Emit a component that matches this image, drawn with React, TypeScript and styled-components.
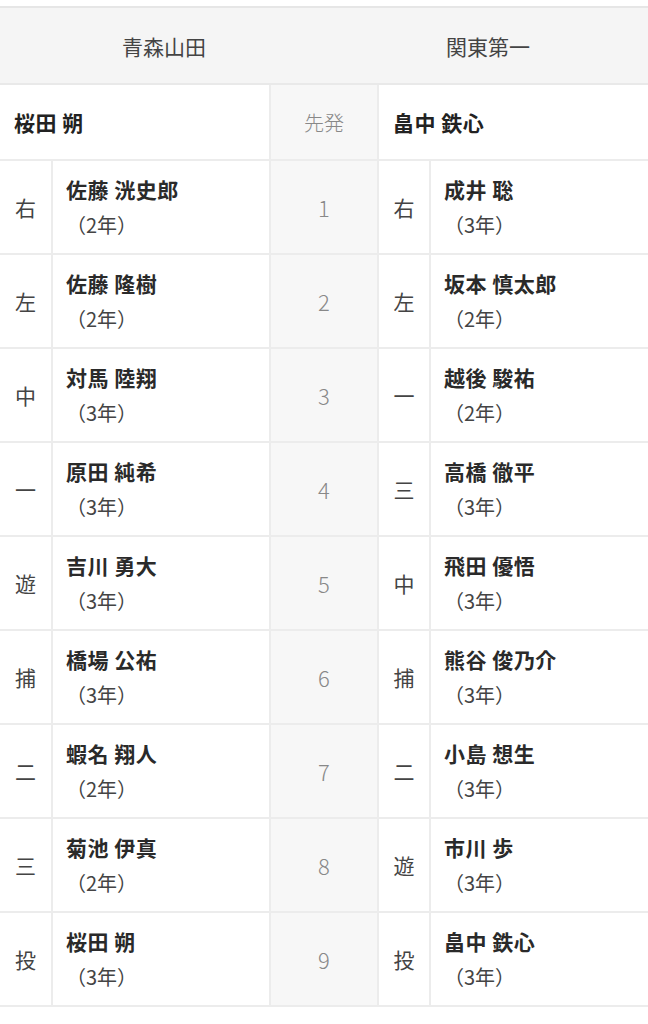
import styled, { createGlobalStyle } from "styled-components";

type Player = { pos: string; name: string; grade: number };

const home: Player[] = [
  { pos: "右", name: "佐藤 洸史郎", grade: 2 },
  { pos: "左", name: "佐藤 隆樹", grade: 2 },
  { pos: "中", name: "対馬 陸翔", grade: 3 },
  { pos: "一", name: "原田 純希", grade: 3 },
  { pos: "遊", name: "吉川 勇大", grade: 3 },
  { pos: "捕", name: "橋場 公祐", grade: 3 },
  { pos: "二", name: "蝦名 翔人", grade: 2 },
  { pos: "三", name: "菊池 伊真", grade: 2 },
  { pos: "投", name: "桜田 朔", grade: 3 },
];

const away: Player[] = [
  { pos: "右", name: "成井 聡", grade: 3 },
  { pos: "左", name: "坂本 慎太郎", grade: 2 },
  { pos: "一", name: "越後 駿祐", grade: 2 },
  { pos: "三", name: "高橋 徹平", grade: 3 },
  { pos: "中", name: "飛田 優悟", grade: 3 },
  { pos: "捕", name: "熊谷 俊乃介", grade: 3 },
  { pos: "二", name: "小島 想生", grade: 3 },
  { pos: "遊", name: "市川 歩", grade: 3 },
  { pos: "投", name: "畠中 鉄心", grade: 3 },
];

const GlobalStyle = createGlobalStyle`
  body {
    margin: 0;
    background: #fff;
    font-family: "Noto Sans CJK JP", "Noto Sans", sans-serif;
    color: #333;
  }
`;

export default function App() {
  return (
    <>
      <GlobalStyle />
      <Page>
        <TeamHeader>
          <TeamName>青森山田</TeamName>
          <TeamName>関東第一</TeamName>
        </TeamHeader>
        <Lineup>
          <colgroup>
            <col style={{ width: 53 }} />
            <col style={{ width: 218 }} />
            <col style={{ width: 108 }} />
            <col style={{ width: 52 }} />
            <col style={{ width: 217 }} />
          </colgroup>
          <tbody>
            <tr>
              <PitcherCell colSpan={2}>桜田 朔</PitcherCell>
              <NumberCell $head>先発</NumberCell>
              <PitcherCell colSpan={2} $last>畠中 鉄心</PitcherCell>
            </tr>
            {home.map((p, i) => (
              <tr key={i}>
                <PosCell>{p.pos}</PosCell>
                <NameCell>
                  <PlayerName>{p.name}</PlayerName>
                  <Grade>（{p.grade}年）</Grade>
                </NameCell>
                <NumberCell>{i + 1}</NumberCell>
                <PosCell>{away[i].pos}</PosCell>
                <NameCell $last>
                  <PlayerName>{away[i].name}</PlayerName>
                  <Grade>（{away[i].grade}年）</Grade>
                </NameCell>
              </tr>
            ))}
          </tbody>
        </Lineup>
      </Page>
    </>
  );
}

const Page = styled.div`
  width: 648px;
  padding-top: 6px;
`;

const TeamHeader = styled.div`
  display: grid;
  grid-template-columns: 1fr 1fr;
  height: 75px;
  background: #f5f5f5;
  border-top: 2px solid #e6e6e6;
  border-bottom: 2px solid #e9e9e9;
`;

const TeamName = styled.div`
  display: flex;
  align-items: center;
  justify-content: center;
  padding-left: 4px;
  font-size: 21px;
  color: #444;
`;

const Lineup = styled.table`
  width: 648px;
  table-layout: fixed;
  border-collapse: separate;
  border-spacing: 0;
`;

const Cell = styled.td<{ $last?: boolean }>`
  padding: 0;
  border-bottom: 2px solid #ececec;
  border-right: ${(p) => (p.$last ? "none" : "2px solid #ececec")};
  vertical-align: middle;
`;

const PitcherCell = styled(Cell)`
  height: 74px;
  padding-left: 14px;
  font-size: 21px;
  font-weight: 700;
  letter-spacing: 0.5px;
  color: #222;
`;

const NumberCell = styled(Cell)<{ $head?: boolean }>`
  background: #f7f7f7;
  text-align: center;
  font-size: ${(p) => (p.$head ? "20px" : "22px")};
  font-weight: 300;
  color: #888;
`;

const PosCell = styled(Cell)`
  height: 92px;
  text-align: center;
  font-size: 21px;
  color: #444;
`;

const NameCell = styled(Cell)`
  padding-left: 13px;
  line-height: 35px;
`;

const PlayerName = styled.div`
  font-size: 21px;
  font-weight: 700;
  letter-spacing: 0.5px;
  color: #2a2a2a;
`;

const Grade = styled.div`
  font-size: 20px;
  color: #444;
`;
